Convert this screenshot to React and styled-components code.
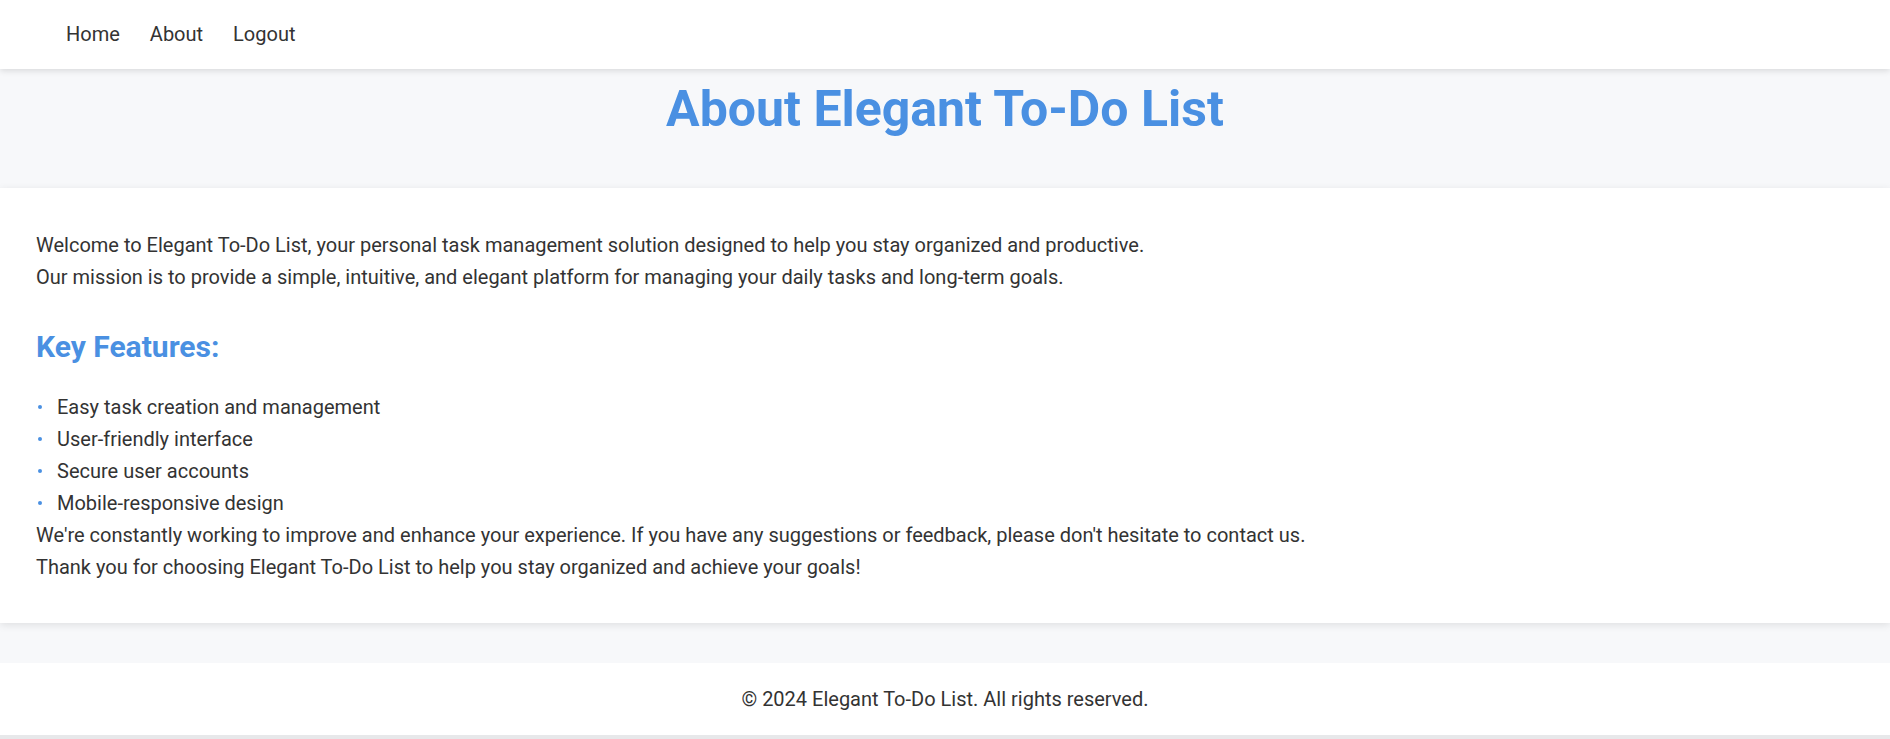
import React from "react";
import styled, { createGlobalStyle } from "styled-components";

const GlobalStyle = createGlobalStyle`
  * { box-sizing: border-box; }
  html, body { margin: 0; padding: 0; }
  body {
    background: #f7f8fa;
    font-family: Roboto, "Noto Sans", "Liberation Sans", sans-serif;
    color: #333333;
  }
`;

const Page = styled.div`
  display: flex;
  flex-direction: column;
  min-height: 739px;
`;

const NavBar = styled.nav`
  height: 69px;
  background: #ffffff;
  box-shadow: 0 2px 6px rgba(0, 0, 0, 0.12);
  display: flex;
  align-items: center;
  padding: 0 0 2px 66px;
  gap: 30px;
  position: relative;
  z-index: 2;
`;

const NavLink = styled.a`
  font-size: 20px;
  color: #333333;
  text-decoration: none;
  cursor: pointer;
`;

const Header = styled.header`
  padding: 10px 0 49px;
  text-align: center;
`;

const Title = styled.h1`
  margin: 0;
  font-size: 50px;
  line-height: 60px;
  font-weight: 700;
  color: #4a90e2;
`;

const Card = styled.main`
  background: #ffffff;
  padding: 41px 36px 40px;
  box-shadow: 0 2px 8px rgba(0, 0, 0, 0.1);
  font-size: 20px;
  line-height: 32px;
`;

const Paragraph = styled.p`
  margin: 0;
`;

const SectionTitle = styled.h2`
  margin: 35px 0 25px;
  font-size: 30px;
  line-height: 38px;
  font-weight: 700;
  color: #4a90e2;
`;

const FeatureList = styled.ul`
  list-style: none;
  margin: 0;
  padding: 0;
`;

const FeatureItem = styled.li`
  display: flex;
  align-items: center;
  &::before {
    content: "";
    width: 4px;
    height: 4px;
    border-radius: 50%;
    background: #4a90e2;
    margin: 0 15px 0 2px;
  }
`;

const Footer = styled.footer`
  margin-top: 40px;
  height: 72px;
  background: #ffffff;
  display: flex;
  align-items: center;
  justify-content: center;
  font-size: 20px;
  color: #333333;
  box-shadow: 0 4px 0 #e7e8ea;
`;

const features = [
  "Easy task creation and management",
  "User-friendly interface",
  "Secure user accounts",
  "Mobile-responsive design",
];

export default function App() {
  return (
    <>
      <GlobalStyle />
      <Page>
        <NavBar>
          <NavLink>Home</NavLink>
          <NavLink>About</NavLink>
          <NavLink>Logout</NavLink>
        </NavBar>
        <Header>
          <Title>About Elegant To-Do List</Title>
        </Header>
        <Card>
          <Paragraph>
            Welcome to Elegant To-Do List, your personal task management solution designed to help you stay organized and productive.
          </Paragraph>
          <Paragraph>
            Our mission is to provide a simple, intuitive, and elegant platform for managing your daily tasks and long-term goals.
          </Paragraph>
          <SectionTitle>Key Features:</SectionTitle>
          <FeatureList>
            {features.map((f) => (
              <FeatureItem key={f}>{f}</FeatureItem>
            ))}
          </FeatureList>
          <Paragraph>
            We're constantly working to improve and enhance your experience. If you have any suggestions or feedback, please don't hesitate to contact us.
          </Paragraph>
          <Paragraph>
            Thank you for choosing Elegant To-Do List to help you stay organized and achieve your goals!
          </Paragraph>
        </Card>
        <Footer>© 2024 Elegant To-Do List. All rights reserved.</Footer>
      </Page>
    </>
  );
}
